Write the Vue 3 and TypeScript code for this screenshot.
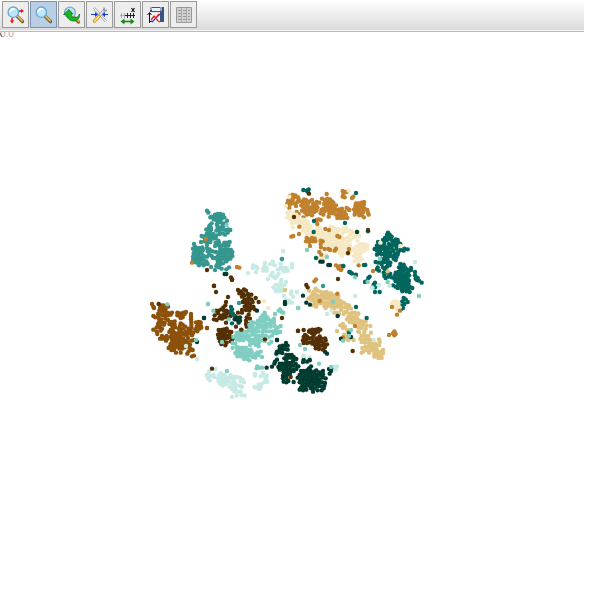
<script setup lang="ts">
interface Cluster {
  color: string
  x: number
  y: number
  points: string
}

interface Dot {
  x: number
  y: number
  color: string
}

// Cluster points are stored in thirds of a plot unit, relative to the cluster origin.
const UNITS = 3

const clusters: Cluster[] = [
  {
    color: '#8c510a', x: 140, y: 258,
    points: `36 42 40 50 42 54 64 46 70 46 78 48 84 50 60 54 68 56 76 58 58 62 66 64 74 66 82 68 90 70 96 68
      40 78 46 82 54 72 60 74 68 76 76 78 84 76 92 74 56 84 64 88 58 94 64 98 54 102 60 106 50 112 58 112 40 119 50 124 52 132 62 122 66 116
      76 86 84 90 94 96 104 94 100 100 74 98 72 104 88 102 96 106 104 104 98 114 106 112 92 120 100 124 96 130 88 126
      112 68 120 70 130 68 138 66 112 76 120 78 128 76 134 72 122 84 128 82
      153 72 153 80 153 88 154 96 154 104 154 112 152 120 146 116 148 124 150 130 156 136 142 128 138 124
      60 146 66 138 72 142 80 138 82 146 78 152 68 146 92 140 96 150 100 140
      122 100 128 104 120 108 116 116 122 120 130 116 136 110 118 126 126 128 132 134 122 138 114 134 108 130 106 140 114 144 104 148
      168 97 176 96 182 97 174 104 182 106 170 110 178 116 166 118 172 124 201 114 160 128
      98 156 106 156 114 154 122 150 130 146 92 162 100 164 108 164 116 162 124 160 132 156 140 152 144 144 140 136
      90 170 98 172 106 172 114 170 122 168 130 168 138 162 144 158 86 174 94 180 102 180 118 176 126 176 134 172
      108 188 122 188 142 191 146 184 154 178 158 180 156 199 162 197 148 172 150 164 154 152 162 150`,
  },
  {
    color: '#35978f', x: 185, y: 168,
    points: `66 32 70 38 90 44 98 42 106 42 114 44 80 50 88 52 96 50 104 52 112 52 118 52 76 52 86 58 94 60 102 58 110 56
      126 62 98 68 106 66 112 70 96 74 120 70 80 70 74 76 72 82 78 84 64 88 70 92 78 90 98 82 106 82 114 80 112 88 104 92 122 90 130 88 136 90 128 98
      84 102 74 100 66 100 94 92 62 108 70 110 78 108 86 108 94 106 104 102 114 100 120 104
      50 108 56 110 60 116 68 118 76 118 84 116 92 114 48 126 58 124 66 128 76 126 66 134 134 126 126 128 118 128
      100 122 92 128 98 134 90 138 104 138 112 136 122 138 130 136 106 146 102 128
      27 132 30 140 24 146 28 152 36 144 44 144 52 142 36 154 44 154 54 150 66 144 74 148 78 154 68 154 72 164 80 168 66 170
      26 160 34 162 42 162 50 160 24 170 32 172 40 172 48 172 56 168 24 180 32 182 40 182 48 182 56 178 28 186 36 188 44 192 52 190 60 190 42 196 56 196 64 184 68 192
      106 150 114 148 122 150 130 148 138 150 142 156 106 158 114 158 122 158 130 158 138 162 142 168 108 168 116 168 124 168 132 170 104 176 112 176 120 178 128 178 136 176 124 184
      84 154 92 156 98 158 102 164 98 170 90 174 84 174
      98 182 106 184 98 190 106 192 114 190 94 198 102 202 78 201 90 210 110 206 124 208 132 202`,
  },
  { color: '#bf812d', x: 185, y: 168, points: '62 117 21 188 156 201 163 203' },
  { color: '#543005', x: 185, y: 168, points: '66 210 138 232 141 238 87 257' },
  { color: '#003c30', x: 185, y: 168, points: '119 222 124 222' },
  { color: '#80cdc1', x: 185, y: 168, points: '125 75' },
  {
    color: '#bf812d', x: 280, y: 148,
    points: `24 62 30 48 38 44 46 46 34 52 42 52 50 50 54 52 22 70 30 64 38 60 56 58 24 78 32 72 42 70 52 66 62 64 68 68 64 76 48 78 28 84
      72 58 78 60 88 64 96 60 84 70 74 70 80 78 70 82 100 70 110 66 118 68 108 76 98 78 88 82 78 88 96 86 104 84 112 82
      66 92 74 96 84 92 92 94 88 102 80 104 96 106 102 96 110 92 70 112 50 96 56 102
      140 42 126 56 134 60 142 56 150 58 138 66 146 66 156 64 132 72 142 74 152 72 160 68 148 82 138 82 130 86 158 78 168 76 154 90 144 90 134 94 124 90 122 100 130 104 148 100 146 110
      116 118 122 120 110 120 158 100 164 84 170 90 178 88 186 86 162 94 176 98 184 96 194 96 168 104 178 108 188 106 198 104 172 114 182 114 192 114 202 114 206 88 200 84
      188 33 194 36 200 36 190 42 188 50 194 52 216 54 220 50 208 90 228 70 236 70 244 68 252 66 226 78 234 80 242 78 250 78 222 88 230 88 238 88 246 86 254 86 226 96 234 98 242 98 250 96 224 104 238 106 246 106 252 112 262 90 264 98 266 104 252 72`,
  },
  {
    color: '#f6e8c3', x: 280, y: 148,
    points: `28 50 18 78 22 98 30 94 40 100 48 104 26 106 34 110 42 112 22 112 54 110 32 118 40 124 50 118 58 120 46 128 66 118 74 120 82 124 36 130 38 142 64 128 72 132 84 132 90 138 72 142 80 144 68 152 78 156 86 152 92 146 82 164 90 164 62 138 54 128
      112 142 120 144 112 150 122 152 104 152 128 160 116 160 108 164 96 166 104 174 114 170 122 170 132 166 140 160 148 156 156 152 146 166 154 162 162 158 114 180 124 180 134 176 142 176 152 172 162 168 170 162 172 154 178 148 166 146 140 184 150 182 160 178 168 182 178 176 184 168 188 158 190 146 198 144 198 154 206 152 214 152 218 158 210 164 204 172 194 176 188 184 178 188 168 192 156 192 146 194 134 192 140 202 152 202 162 202 172 202 182 198 192 194 202 186 212 180 222 172 228 166 234 156 230 152 238 168 232 182
      160 212 170 212 180 210 190 206 200 204 198 194 210 194 180 220 190 216 198 220 206 222 214 212 222 206 230 200 238 194 246 192 256 194 262 196 252 202 242 206 234 212 226 218 222 228 232 222 242 216 254 212 262 206 240 228 230 236 224 244 236 244 246 238 248 256 208 216 132 234 206 32 152 140 158 142 124 188 186 228`,
  },
  { color: '#f6e8c3', x: 280, y: 148, points: '120 236 112 232 138 224 188 176 176 166 166 172' },
  { color: '#bf812d', x: 280, y: 148, points: '58 140 34 170 40 168 57 162 80 174 88 178 96 174 104 176 78 184 88 186 98 184 106 184 90 198 112 132 136 147 147 150 172 168 178 171 122 182 128 184 122 192 134 207 145 207 150 210 168 206 164 212 123 202 118 216 124 224 207 207 236 256 168 256 174 260 182 258 176 266 184 268 190 258' },
  { color: '#01665e', x: 280, y: 148, points: '70 30 80 32 86 28 84 36 228 39 102 123 101 156 195 129 190 258 252 255 108 234 208 276 215 280 228 285 284 207 264 154' },
  { color: '#003c30', x: 280, y: 148, points: '231 156 121 245 128 245 145 255 150 255' },
  { color: '#543005', x: 280, y: 148, points: '87 41 42 111 264 150 204 219' },
  { color: '#80cdc1', x: 280, y: 148, points: '141 231 81 210 5 237' },
  { color: '#c7eae5', x: 280, y: 148, points: '9 213' },
  {
    color: '#01665e', x: 365, y: 188,
    points: `69 38 66 44 74 44 70 52 80 50 60 54 78 58 66 60 54 60 58 66 82 62 92 58 98 60 100 68 92 66 84 70 106 72 98 76 90 76 80 76 72 72 58 74
      39 66 36 76 42 74 48 78 32 86 40 84 48 88 56 84 64 82 72 84 80 84 36 92 44 94 60 92 70 92 36 104 42 100 50 102 58 102 66 100 76 98 84 92
      118 86 128 88 116 92 94 86 106 90 100 96 90 100 98 104 94 112 86 108 76 108 68 110 60 110 58 118 68 120 86 116 92 120 76 128 68 130 58 126 32 126 40 128 48 116 52 124 50 132
      74 136 66 140 54 142 60 148 38 142 36 148 42 152 64 154 56 158 68 158 76 162 58 168 62 174 70 170 80 172
      106 132 116 134 102 142 110 142 120 142 106 150 116 152 126 148 138 144 138 150 130 156 122 160 110 160 100 156 92 158 96 164 104 168 114 168 124 168 132 166 90 166 88 176 98 176 108 176 118 176 128 176 92 184 102 184 112 184 122 184 132 182 100 192 110 192 120 192 130 190 106 200 116 200 126 200 134 200 110 208 120 208 130 208 142 204 112 214 124 214 134 216
      84 196 92 200 98 204 150 156 150 166 152 176 158 174 162 182 170 188 156 180 30 188 26 194 30 202 30 216 44 216 14 170 10 174 4 184 1 135
      116 234 122 238 112 244 128 246 118 252 110 256 114 264 108 268 0 186`,
  },
  { color: '#f6e8c3', x: 365, y: 188, points: '106 78 46 68 3 75 0 86 84 246 92 244 98 246 80 252 90 254 100 254 86 262 96 264 104 262 98 270' },
  { color: '#80cdc1', x: 365, y: 188, points: '45 117 162 228 68 186 8 186 22 202' },
  { color: '#c7eae5', x: 365, y: 188, points: '150 126 74 197 42 195 22 204' },
  { color: '#bf812d', x: 365, y: 188, points: '24 153 81 261 105 272 96 284' },
  {
    color: '#543005', x: 200, y: 248,
    points: `42 18 48 36 84 51 114 30 122 34 132 28 138 32 118 40 128 40 134 46 144 42 154 44 146 52 126 50 134 58 144 58 154 58 167 54 128 66 136 68 146 68 140 76 150 74 158 66 134 80 144 84 154 84 164 88 160 80 176 66 138 90 148 92 126 90 126 98 114 98
      78 66 76 76 70 82 64 88 72 92 80 92 48 92 56 92 54 100 44 106 62 108 70 104 78 102 86 98 94 98 42 118 50 120 58 114 66 116 74 112 82 112 78 128 92 108 98 100 146 104 140 112 150 116 138 122 146 132 138 132 140 140 108 140 124 150 246 114 195 176 294 153 96 0
      56 150 64 150 72 148 80 146 60 158 68 158 76 156 86 154 94 156 54 164 64 168 72 166 80 168 88 164 56 174 66 176 74 176 82 174 92 172 100 174 60 184 70 184 80 188 92 184 76 196 64 192 96 180`,
  },
  { color: '#01665e', x: 200, y: 248, points: '93 81 96 88 92 94 96 100 104 108 96 130' },
  { color: '#003c30', x: 200, y: 248, points: '110 112 120 112 112 120 120 122 116 128 104 118 171 92 255 66 255 72 12 114 231 180' },
  { color: '#35978f', x: 200, y: 248, points: '117 69' },
  {
    color: '#80cdc1', x: 200, y: 248,
    points: `24 72 40 92 86 118 240 88 236 92 244 96 250 98 225 102 194 98 188 106 196 106 182 114 192 116 202 112 174 122 184 124 194 126 204 118 212 122 222 116 222 126 212 132 202 132 154 126 162 128 172 132 182 134 148 134 158 138 192 136 200 142 190 146 180 142 170 144 160 148 150 144 212 140 224 138 234 142 242 138 228 148 240 156 230 156 218 154 208 154 198 154 188 156 176 154 166 156 156 154 146 152 140 156 130 154 120 156 110 158 108 168 118 168 128 164 138 166 148 166 158 164 168 166 178 168 188 166 198 168 176 178 166 176 128 176 116 176 144 178 206 172 294 84`,
  },
  { color: '#f6e8c3', x: 200, y: 248, points: '204 84 192 64' },
  { color: '#80cdc1', x: 200, y: 293, points: '188 34 100 36 110 30 118 36 128 34 138 38 110 44 120 46 130 46 98 54 106 56 146 40 156 44 166 48 174 40 184 46 194 48 176 54 160 54 150 50 176 64 168 60 150 60 208 56 214 50 66 51 98 69 110 66 118 68 128 68 138 68 120 74 112 76 130 76 142 74 152 74 106 84 116 84 126 84 136 84 146 84 156 82 112 94 122 94 132 92 142 94 152 92 132 102 142 102 148 106 158 96 166 98 166 88 172 82 182 80 176 90 186 96 172 124 178 128 186 128 170 130 81 138 216 32 222 24 232 24 240 20' },
  { color: '#c7eae5', x: 200, y: 293, points: '27 140 46 132 20 150 30 152 40 150 62 144 56 152 66 150 74 150 24 160 30 166 42 156 54 160 64 160 74 160 84 158 92 150 56 168 66 168 76 168 86 168 94 160 60 176 70 176 80 178 68 182 104 156 112 156 120 158 128 164 132 172 102 164 122 168 94 174 104 172 100 182 110 180 120 182 90 186 96 192 106 190 126 186 122 200 112 200 104 200 124 210 134 212 110 212 96 216 165 146 165 152 189 144 182 154 194 152 198 162 201 170 192 172 176 178 184 178 164 186 172 188 182 188 178 192 198 42' },
  { color: '#543005', x: 200, y: 293, points: '36 131 195 43 124 14' },
  { color: '#8c510a', x: 200, y: 293, points: '4 8 21 9' },
  { color: '#c7eae5', x: 265, y: 293, points: '36 92 6 152 2 162 5 170 116 93 208 124 216 124 204 132 212 134 134 98' },
  {
    color: '#003c30', x: 265, y: 293,
    points: `36 45 63 54 44 64 52 62 60 62 68 62 44 72 52 72 60 72 68 74 36 80 34 86 44 82 52 84 64 90 72 90 80 90 58 100 66 100 76 98 86 96 88 102 84 108 64 108
      5 128 21 125 30 110 36 104 28 116 44 116 52 116 60 116 70 114 78 114 40 126 48 126 56 126 66 124 76 124 86 122 92 116 98 124 44 134 54 134 64 134 74 134 84 134 94 132 56 142 66 142 76 142 86 138 54 152 64 152 74 148 54 160 64 160 56 170 64 172 70 168 86 171 100 124 114 111 126 110 134 106
      138 124 132 130 126 136 136 136 108 138 116 138 110 146 120 146 130 146 140 144 148 140 154 136 164 142 158 148 150 150 140 154 130 154 120 154 110 156 104 150 98 158 106 164 116 164 126 164 136 164 146 162 156 158 166 152 174 148 174 158 182 160 164 164 154 168 144 172 134 172 124 174 114 174 104 172 112 180 122 184 132 182 142 182 152 178 162 174 172 172 180 174 178 182 168 184 158 184 148 190 138 190 118 190 108 188 104 194 114 196 124 194 144 200 158 196 170 196 176 190 174 138 192 132 198 138 194 146 198 130 186 86 180 80`,
  },
  { color: '#543005', x: 265, y: 293, points: '99 17 116 15 134 16 142 14 152 14 160 12 166 14 132 20 140 24 150 24 160 20 146 30 120 30 116 36 126 34 134 40 142 38 124 44 114 46 116 54 126 54 134 52 144 48 154 40 164 34 168 40 160 46 152 50 142 56 150 60 160 56 170 50 180 40 182 46 176 56 186 58 180 66 170 62 160 66 152 70 162 72 174 74 77 156' },
  { color: '#80cdc1', x: 265, y: 293, points: '105 60 120 72 116 105 162 116 198 126' },
  { color: '#c7eae5', x: 265, y: 293, points: '116 95' },
  {
    color: '#dfc27d', x: 295, y: 238,
    points: `42 62 62 56 68 62 56 66 60 74 52 72 48 80 40 86 50 90 58 84 68 84 66 76 78 66 86 68 94 66 102 70 96 76 86 76 78 78 108 70 104 78 114 76 122 76 130 78 128 86 118 86 108 86 98 86 88 86 78 90 68 94 58 96 64 104 56 106 76 100 86 98 96 98 106 96 116 96 126 94 136 92 64 110 88 108 98 108 108 106 118 104 128 102 138 102 146 98 154 104 162 106 168 116 158 114 148 112 138 110 128 110 118 114 110 110 138 120 92 114
      118 128 126 128 132 132 146 132 150 126 156 126 160 140 164 132 172 128 180 128 188 134 170 138 180 140 190 130 156 148 166 148 176 148 186 146 194 152 202 154 212 154 164 156 174 158 184 158 194 162 204 164 214 166 226 168 190 172 200 174 212 176 176 154 192 186 208 186 228 188
      136 166 144 162 150 170 144 174 156 180 160 188 126 183 158 200 150 206 160 210 166 202 176 210 200 196 210 198 220 198 196 206 206 208 216 208 226 210 200 216 210 218 222 218 252 208 254 216 252 226 242 222 232 222 222 228 212 230 202 234 232 232 242 232 246 240 236 240 226 240 216 240 206 244 200 248 222 248 238 250 248 250 258 246 264 240 264 250 258 258 246 256 238 260 250 264 260 264 190 184 148 194`,
  },
  { color: '#dfc27d', x: 295, y: 238, points: '278 4' },
  { color: '#bf812d', x: 295, y: 238, points: '58 34 63 28 74 93 127 71 138 0 144 202 180 168 298 184 294 190 302 192 282 195 298 196' },
  { color: '#543005', x: 295, y: 238, points: '34 45 38 52 129 27 173 243' },
  { color: '#003c30', x: 295, y: 238, points: '24 77 34 98 45 104 128 138 138 206 168 201 4 267 44 270 26 270' },
  { color: '#01665e', x: 295, y: 238, points: '165 6 170 10 182 14 215 144 183 111 162 188' },
  { color: '#80cdc1', x: 295, y: 238, points: '180 22 10 114 114 96 144 212 168 180 162 198' },
  { color: '#35978f', x: 295, y: 238, points: '84 48' },
  { color: '#c7eae5', x: 295, y: 238, points: '6 66 180 78 96 132 110 122 236 210 24 258' },
  { color: '#c7eae5', x: 240, y: 208, points: '129 33 24 99 40 76 38 84 48 80 52 84 48 96 75 69 74 78 70 86 80 84 70 92 80 92 98 64 90 72 100 72 104 76 122 72 122 82 114 88 126 88 132 84 140 84 138 92 144 92 132 94 156 72 156 82 98 98 92 106 100 110 106 114 84 117 116 100 112 108 124 120 122 128 138 126 134 134 100 142 108 134 116 138 106 148 116 148 124 144 128 152 118 154 108 154 126 138 132 168 140 180 148 182 156 188 146 188 154 154 171 156 153 162 160 170' },
  { color: '#35978f', x: 240, y: 208, points: '126 57' },
  { color: '#003c30', x: 240, y: 208, points: '135 186 135 191' },
  { color: '#dfc27d', x: 240, y: 208, points: '135 150' },
  { color: '#80cdc1', x: 140, y: 258, points: '204 42 82 43' },
  { color: '#003c30', x: 140, y: 258, points: '192 84 171 156' },
  { color: '#80cdc1', x: 140, y: 258, points: '168 150' },
  { color: '#543005', x: 140, y: 258, points: '56 42' },
  { color: '#c7eae5', x: 140, y: 258, points: '171 207 138 168' },
]

const dots: Dot[] = clusters.flatMap((cluster) => {
  const values = cluster.points.trim().split(/\s+/).map(Number)
  const result: Dot[] = []
  for (let i = 0; i + 1 < values.length; i += 2) {
    result.push({
      x: cluster.x + values[i] / UNITS,
      y: cluster.y + values[i + 1] / UNITS,
      color: cluster.color,
    })
  }
  return result
})
</script>

<template>
  <main class="viewer">
    <div class="toolbar" role="toolbar" aria-label="Plot tools">
      <button type="button" class="tool" aria-label="Zoom and pan">
        <svg viewBox="0 0 20 20" class="icon">
          <path d="M11.500 11.500l5 5" stroke="#71512c" stroke-width="3.200" stroke-linecap="round" />
          <path d="M12 11.500l4.300 4.300" stroke="#eab65d" stroke-width="1.800" stroke-linecap="round" />
          <circle cx="7.300" cy="7.200" r="5.200" fill="#bce7fb" stroke="#6faacf" stroke-width="1.400" />
          <path d="M4 7q1-4 5-3" stroke="#fff" stroke-width="1.800" fill="none" />
          <path d="M13 6h3M6 13v3" stroke="#f00" stroke-width="1.400" />
          <path d="M15 4l3 2-3 2zM4 15.500l2 3 2-3z" fill="#f00" />
        </svg>
      </button>
      <button type="button" class="tool active" aria-label="Zoom" aria-pressed="true">
        <svg viewBox="0 0 20 20" class="icon">
          <path d="M11.500 11.500l5 5" stroke="#71512c" stroke-width="3.200" stroke-linecap="round" />
          <path d="M12 11.500l4.300 4.300" stroke="#eab65d" stroke-width="1.800" stroke-linecap="round" />
          <circle cx="7.300" cy="7.200" r="5.200" fill="#bce7fb" stroke="#6faacf" stroke-width="1.400" />
          <path d="M4 7q1-4 5-3" stroke="#fff" stroke-width="1.800" fill="none" />
        </svg>
      </button>
      <button type="button" class="tool" aria-label="Undo zoom">
        <svg viewBox="0 0 20 20" class="icon">
          <path d="M12 12.500l4.500 4.500" stroke="#8b6130" stroke-width="3.200" stroke-linecap="round" />
          <path d="M13 13l3.500 3.500" stroke="#eab65d" stroke-width="1.600" stroke-linecap="round" />
          <circle cx="8" cy="7.500" r="5.400" fill="#bce7fb" stroke="#80aabd" stroke-width="1.400" />
          <path d="M1.500 9.500L7 4.500l4 4.500H9c0 3 3 4 5 3.500 2-.5 3-2 3.500-3.500.5 4-2 7-5.500 7-4 0-7-2.500-7.500-6.500z" fill="#18b81e" stroke="#0b7714" stroke-width=".8" />
        </svg>
      </button>
      <button type="button" class="tool" aria-label="Settings">
        <svg viewBox="0 0 20 20" class="icon">
          <path d="M4 3l12 13.500" stroke="#888" stroke-width="2.400" />
          <path d="M4 3l12 13.500" stroke="#f5f5f5" stroke-width="1.200" />
          <path d="M15.500 4L9 11" stroke="#999" stroke-width="2.800" />
          <path d="M15.500 4L9 11" stroke="#eee" stroke-width="1.400" />
          <path d="M14 2.500v3h3" stroke="#999" stroke-width="1.400" />
          <path d="M9 11.500L4.500 16" stroke="#b98c2a" stroke-width="3.400" stroke-linecap="round" />
          <path d="M9 11.500L4.500 16" stroke="#ffe06b" stroke-width="1.800" stroke-linecap="round" />
          <path d="M1 9.500h6M14 9.500h4" stroke="#123bea" stroke-width="1.200" />
          <path d="M5 7l3 2.500L5 12zM15 7l-3 2.500 3 2.500z" fill="#123bea" />
        </svg>
      </button>
      <button type="button" class="tool" aria-label="Scale x axis">
        <svg viewBox="0 0 20 20" class="icon">
          <path d="M2 10.500h6M3.500 8v5M6.500 8v5" stroke="#aaa" />
          <path d="M7 10.500h10M9.500 8v5M12.500 8v5M15.500 8v5" stroke="#222" />
          <path d="M13.500 3l3 4M16.500 3l-3 4" stroke="#111" stroke-width="1.200" />
          <path d="M5 16.500h10" stroke="#118b18" stroke-width="1.600" />
          <path d="M2.500 16.500l4-3v6zM16.500 16.500l-4-3v6z" fill="#118b18" />
        </svg>
      </button>
      <button type="button" class="tool" aria-label="Save plot">
        <svg viewBox="0 0 20 20" class="icon">
          <path d="M4 2h14v15h-4V7H4z" fill="#3a5480" />
          <path d="M4 2h2v3H4zM14 2h2v4h-2z" fill="#8da3c4" />
          <path d="M6 3h8v3H6z" fill="#eef2f8" />
          <path d="M5 8h9v9H5z" fill="#f4f6fa" />
          <path d="M3.500 18V8M1.500 10l2-2.500 2 2.500M3 16.500h3" stroke="#111" />
          <path d="M6 17l3-3M11 12l3-3" stroke="#1738e6" stroke-width="1.200" />
          <path d="M5 15l3-4 4 5 2 1M9 14l4-5" stroke="#ed2020" stroke-width="1.300" />
        </svg>
      </button>
      <button type="button" class="tool" aria-label="Show data table">
        <svg viewBox="0 0 20 20" class="icon">
          <path d="M2.500 2.500h15v15h-15z" fill="#d2d2d2" stroke="#999" />
          <path d="M4 5.500h3M9 5.500h3M14 5.500h2M4 8.500h3M9 8.500h3M14 8.500h2M4 11.500h3M9 11.500h3M14 11.500h2M4 14.500h3M9 14.500h3M14 14.500h2" stroke="#999" />
          <path d="M7.500 3v14M12.500 3v14" stroke="#ababab" />
        </svg>
      </button>
    </div>
    <svg class="plot" viewBox="0 0 584 568" role="img" aria-label="Scatter plot of ten clusters">
      <text x="0" y="5" class="tick">0.0</text>
      <path d="M0 1l2 4" stroke="#555" />
      <circle v-for="(dot, index) in dots" :key="index" :cx="dot.x" :cy="dot.y" r="2.200" :fill="dot.color" />
    </svg>
  </main>
</template>

<style>
body {
  background: #fff;
}
</style>

<style scoped>
.viewer {
  padding-right: 16px;
  font-family: "Liberation Sans", Arial, sans-serif;
}

.toolbar {
  display: flex;
  box-sizing: border-box;
  height: 32px;
  padding: 1px 2px;
  border-bottom: 1px solid #bcbcbc;
  background: linear-gradient(#fff, #dadada);
  box-shadow: inset 0 -1px #f4f4f4;
}

.tool {
  display: flex;
  align-items: center;
  justify-content: center;
  box-sizing: border-box;
  width: 27px;
  height: 27px;
  margin-right: 1px;
  padding: 0;
  border: 1px solid #999;
  border-radius: 0;
  background: #ededed;
}

.tool.active {
  border-color: #7b93ad;
  background: #b8cfe5;
}

.icon {
  display: block;
  width: 20px;
  height: 20px;
  fill: none;
}

.plot {
  display: block;
  width: 100%;
  height: auto;
  overflow: hidden;
}

.tick {
  fill: #aaa;
  font-size: 10px;
}
</style>
